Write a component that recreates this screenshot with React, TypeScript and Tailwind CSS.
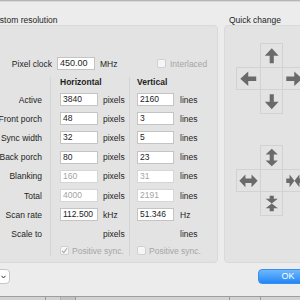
import React from "react";

type Row = {
  label: string;
  h?: string;
  hu: string;
  v?: string;
  vu: string;
  disabled?: boolean;
};

const rows: Row[] = [
  { label: "Active", h: "3840", hu: "pixels", v: "2160", vu: "lines" },
  { label: "Front porch", h: "48", hu: "pixels", v: "3", vu: "lines" },
  { label: "Sync width", h: "32", hu: "pixels", v: "5", vu: "lines" },
  { label: "Back porch", h: "80", hu: "pixels", v: "23", vu: "lines" },
  { label: "Blanking", h: "160", hu: "pixels", v: "31", vu: "lines", disabled: true },
  { label: "Total", h: "4000", hu: "pixels", v: "2191", vu: "lines", disabled: true },
  { label: "Scan rate", h: "112.500", hu: "kHz", v: "51.346", vu: "Hz" },
  { label: "Scale to", hu: "pixels", vu: "lines" },
];

function Field({ value, disabled, wide }: { value: string; disabled?: boolean; wide?: boolean }) {
  return (
    <div
      className={`h-[13px] shrink-0 ${wide ? "w-[38px]" : "w-[37px]"} bg-white border pl-[2px] leading-[11px] text-[8.5px] whitespace-nowrap overflow-hidden ${
        disabled ? "border-[#d6d6d6] text-[#a4a4a4]" : "border-[#c4c4c4] text-[#1c1c1c]"
      }`}
    >
      {value}
    </div>
  );
}

function Check({ checked }: { checked?: boolean }) {
  return (
    <div className="w-[9px] h-[9px] shrink-0 rounded-[2px] border border-[#d0d0d0] bg-[#f6f6f6] flex items-center justify-center">
      {checked && (
        <svg width="7" height="7" viewBox="0 0 7 7">
          <path d="M1 3.8 L2.8 5.6 L6 1.2" stroke="#a9a9a9" strokeWidth="1.1" fill="none" />
        </svg>
      )}
    </div>
  );
}

const ARROW = "M12 3.5 L19.7 12 L14.3 12 L14.3 20.5 L9.7 20.5 L9.7 12 L4.3 12 Z";
const DOUBLE = "M12 2 L18.8 8.5 L14.3 8.5 L14.3 15 L18.8 15 L12 21.5 L5.2 15 L9.7 15 L9.7 8.5 L5.2 8.5 Z";
const CONVERGE =
  "M9.7 3 L14.3 3 L14.3 6.5 L18.8 6.5 L12 11.8 L5.2 6.5 L9.7 6.5 Z M12 11.8 L18.8 17 L14.3 17 L14.3 20.5 L9.7 20.5 L9.7 17 L5.2 17 Z";

function Glyph({ d, rot = 0 }: { d: string; rot?: number }) {
  return (
    <svg width="23.5" height="23.5" viewBox="0 0 24 24">
      <g transform={`rotate(${rot} 12 12)`}>
        <path d={d} fill="#6a6a6a" />
      </g>
    </svg>
  );
}

function Pad({ top, left, right, bottom }: { top: React.ReactNode; left: React.ReactNode; right: React.ReactNode; bottom: React.ReactNode }) {
  return (
    <div className="grid grid-cols-[23.5px_23.5px_23.5px] grid-rows-[23.5px_23.5px_23.5px]">
      <div />
      <div className="border-l border-r border-t border-[#d2d2d2] flex items-center justify-center">{top}</div>
      <div />
      <div className="border-l border-t border-b border-[#d2d2d2] flex items-center justify-center">{left}</div>
      <div className="border border-[#d2d2d2]" />
      <div className="border-r border-t border-b border-[#d2d2d2] flex items-center justify-center">{right}</div>
      <div />
      <div className="border-l border-r border-b border-[#d2d2d2] flex items-center justify-center">{bottom}</div>
      <div />
    </div>
  );
}

export default function App() {
  return (
    <div className="w-[300px] h-[300px] overflow-hidden bg-[#ececec] flex flex-col font-['Liberation_Sans',Arial,sans-serif] text-[8.5px] leading-[10px] text-[#1e1e1e]">
      <div className="h-px shrink-0 bg-[#b6b6b6]" />
      <div className="h-px shrink-0 bg-[#d8d8d8]" />

      <div className="flex gap-[6px] ml-[-20px] mt-[13px] shrink-0">
        {/* Custom resolution */}
        <div className="w-[238px] shrink-0 flex flex-col">
          <div className="h-[10px] pl-[9px] whitespace-nowrap">Custom resolution</div>
          <div className="h-[238px] rounded-[4px] border border-[#d9d9d9] bg-[#e3e3e3] pt-[31px] flex flex-col">
            <div className="flex items-center h-[13px]">
              <div className="w-[71px] text-right whitespace-nowrap">Pixel clock</div>
              <div className="ml-[5px] h-[13px] w-[38px] bg-white border border-[#c4c4c4] pl-[2px] leading-[11px] text-[9px]">450.00</div>
              <div className="ml-[5px] w-[57px]">MHz</div>
              <Check />
              <div className="ml-[4px] text-[#a6a6a6]">Interlaced</div>
            </div>

            <div className="mt-[7px] grid grid-cols-[70px_79px_1fr]">
              <div className="h-[13px] border-r border-[#d4d4d4]" />
              <div className="h-[13px] border-r border-[#d4d4d4] pl-[9px] font-bold">Horizontal</div>
              <div className="h-[13px] pl-[7px] font-bold">Vertical</div>

              {rows.map((r) => (
                <React.Fragment key={r.label}>
                  <div className="h-[19.2px] border-r border-[#d4d4d4] flex items-center justify-end pr-[8px] whitespace-nowrap">
                    {r.label}
                  </div>
                  <div className="h-[19.2px] border-r border-[#d4d4d4] flex items-center pl-[9px]">
                    {r.h !== undefined ? <Field value={r.h} disabled={r.disabled} wide /> : <div className="w-[38px] shrink-0" />}
                    <div className="ml-[5px]">{r.hu}</div>
                  </div>
                  <div className="h-[19.2px] flex items-center pl-[7px]">
                    {r.v !== undefined ? <Field value={r.v} disabled={r.disabled} /> : <div className="w-[37px] shrink-0" />}
                    <div className="ml-[6px]">{r.vu}</div>
                  </div>
                </React.Fragment>
              ))}

              <div className="h-[12px] border-r border-[#d4d4d4]" />
              <div className="h-[12px] border-r border-[#d4d4d4] flex items-center pl-[9px] pt-[2px]">
                <Check checked />
                <div className="ml-[3px] text-[#a6a6a6] whitespace-nowrap">Positive sync.</div>
              </div>
              <div className="h-[12px] flex items-center pl-[7px] pt-[2px]">
                <Check />
                <div className="ml-[3px] text-[#a6a6a6] whitespace-nowrap">Positive sync.</div>
              </div>
            </div>
          </div>
        </div>

        {/* Quick change */}
        <div className="w-[120px] shrink-0 flex flex-col">
          <div className="h-[10px] pl-[5px] whitespace-nowrap">Quick change</div>
          <div className="h-[238px] rounded-[4px] border border-[#d9d9d9] bg-[#e3e3e3] pt-[17px] pl-[11px] flex flex-col">
            <Pad
              top={<Glyph d={ARROW} />}
              left={<Glyph d={ARROW} rot={-90} />}
              right={<Glyph d={ARROW} rot={90} />}
              bottom={<Glyph d={ARROW} rot={180} />}
            />
            <div className="mt-[31.5px]">
              <Pad
                top={<Glyph d={DOUBLE} />}
                left={<Glyph d={DOUBLE} rot={90} />}
                right={<Glyph d={CONVERGE} rot={90} />}
                bottom={<Glyph d={CONVERGE} />}
              />
            </div>
          </div>
        </div>
      </div>

      <div className="flex mt-[6px] h-[15px] shrink-0">
        <div className="ml-[-20px] w-[30px] h-[15px] bg-white border border-[#c6c6c6] rounded-[4px] flex items-center justify-end pr-[3px]">
          <svg width="5" height="4" viewBox="0 0 5 4">
            <path d="M0.5 0.8 L2.5 3 L4.5 0.8" stroke="#333" strokeWidth="1" fill="none" />
          </svg>
        </div>
        <div className="ml-auto mr-[-18px] w-[60px] h-[15px] rounded-[4px] bg-linear-to-b from-[#6db8fc] to-[#1e86f7] border border-[#3b8fe8] text-white text-[9px] leading-[13px] text-center">
          OK
        </div>
      </div>

      <div className="mt-[12px] h-px shrink-0 bg-[#9e9e9e]" />
      <div className="flex h-[4px] shrink-0 bg-[#d2d2d2]">
        <div className="w-[46px] border-r border-[#9a9a9a]" />
        <div className="w-[15px] border-r border-[#b0b0b0]" />
        <div className="w-[15px] bg-[#c2c2c2] border-r border-[#9a9a9a]" />
        <div className="w-[154px] border-r border-[#9a9a9a]" />
        <div className="w-[31px] border-r border-[#9a9a9a]" />
        <div className="flex-1" />
      </div>
    </div>
  );
}
